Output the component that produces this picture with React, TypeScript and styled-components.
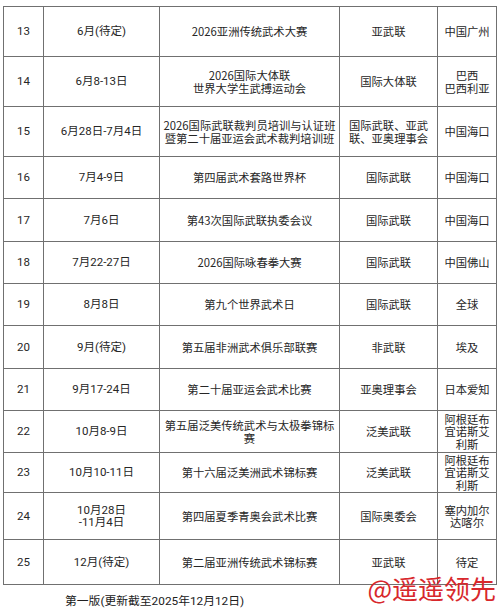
import React from "react";
import styled, { createGlobalStyle } from "styled-components";

const Global = createGlobalStyle`
  html, body { margin: 0; padding: 0; background: #ffffff; }
  body { font-family: "Noto Sans CJK SC", "Noto Sans", sans-serif; color: #262626; }
`;

const Page = styled.div`
  position: relative;
  width: 500px;
  height: 613px;
  padding: 6px 4px 0 3px;
  box-sizing: border-box;
  overflow: hidden;
`;

const Table = styled.table`
  width: 493px;
  border-collapse: collapse;
  table-layout: fixed;
`;

const Row = styled.tr<{ $h: number }>`
  height: ${(p) => p.$h}px;
`;

const Cell = styled.td`
  border: 1px solid #707070;
  padding: 0 2px;
  text-align: center;
  vertical-align: middle;
  font-size: 11.3px;
  line-height: 12.5px;
  white-space: pre-line;
  color: #262626;
  overflow: hidden;
`;

const NumCell = styled(Cell)`
  font-family: Roboto, "Noto Sans CJK SC", sans-serif;
  font-size: 11.5px;
`;

const Footer = styled.div`
  margin-top: 10px;
  padding-left: 62px;
  font-size: 11.8px;
  line-height: 12px;
  color: #202020;
  font-family: Roboto, "Noto Sans CJK SC", sans-serif;
`;

const Watermark = styled.div`
  position: absolute;
  right: 4px;
  top: 577px;
  font-size: 26px;
  line-height: 21px;
  color: #d8282c;
  font-family: "Noto Sans CJK SC", sans-serif;
  letter-spacing: 0;
`;

type R = { n: string; d: string; e: string; o: string; p: string; h: number };

const rows: R[] = [
  { n: "13", d: "6月(待定)", e: "2026亚洲传统武术大赛", o: "亚武联", p: "中国广州", h: 50 },
  { n: "14", d: "6月8-13日", e: "2026国际大体联\n世界大学生武搏运动会", o: "国际大体联", p: "巴西\n巴西利亚", h: 50 },
  { n: "15", d: "6月28日-7月4日", e: "2026国际武联裁判员培训与认证班\n暨第二十届亚运会武术裁判培训班", o: "国际武联、亚武\n联、亚奥理事会", p: "中国海口", h: 50 },
  { n: "16", d: "7月4-9日", e: "第四届武术套路世界杯", o: "国际武联", p: "中国海口", h: 42 },
  { n: "17", d: "7月6日", e: "第43次国际武联执委会议", o: "国际武联", p: "中国海口", h: 43 },
  { n: "18", d: "7月22-27日", e: "2026国际咏春拳大赛", o: "国际武联", p: "中国佛山", h: 42 },
  { n: "19", d: "8月8日", e: "第九个世界武术日", o: "国际武联", p: "全球", h: 42 },
  { n: "20", d: "9月(待定)", e: "第五届非洲武术俱乐部联赛", o: "非武联", p: "埃及", h: 43 },
  { n: "21", d: "9月17-24日", e: "第二十届亚运会武术比赛", o: "亚奥理事会", p: "日本爱知", h: 42 },
  { n: "22", d: "10月8-9日", e: "第五届泛美传统武术与太极拳锦标\n赛", o: "泛美武联", p: "阿根廷布\n宜诺斯艾\n利斯", h: 42 },
  { n: "23", d: "10月10-11日", e: "第十六届泛美洲武术锦标赛", o: "泛美武联", p: "阿根廷布\n宜诺斯艾\n利斯", h: 40 },
  { n: "24", d: "10月28日\n-11月4日", e: "第四届夏季青奥会武术比赛", o: "国际奥委会", p: "塞内加尔\n达喀尔", h: 47 },
  { n: "25", d: "12月(待定)", e: "第二届亚洲传统武术锦标赛", o: "亚武联", p: "待定", h: 45 },
];

export default function App() {
  return (
    <Page>
      <Global />
      <Table>
        <colgroup>
          <col style={{ width: 40 }} />
          <col style={{ width: 116 }} />
          <col style={{ width: 180 }} />
          <col style={{ width: 98 }} />
          <col style={{ width: 59 }} />
        </colgroup>
        <tbody>
          {rows.map((r) => (
            <Row key={r.n} $h={r.h}>
              <NumCell>{r.n}</NumCell>
              <NumCell>{r.d}</NumCell>
              <Cell>{r.e}</Cell>
              <Cell>{r.o}</Cell>
              <Cell>{r.p}</Cell>
            </Row>
          ))}
        </tbody>
      </Table>
      <Footer>第一版(更新截至2025年12月12日)</Footer>
      <Watermark>@遥遥领先</Watermark>
    </Page>
  );
}
